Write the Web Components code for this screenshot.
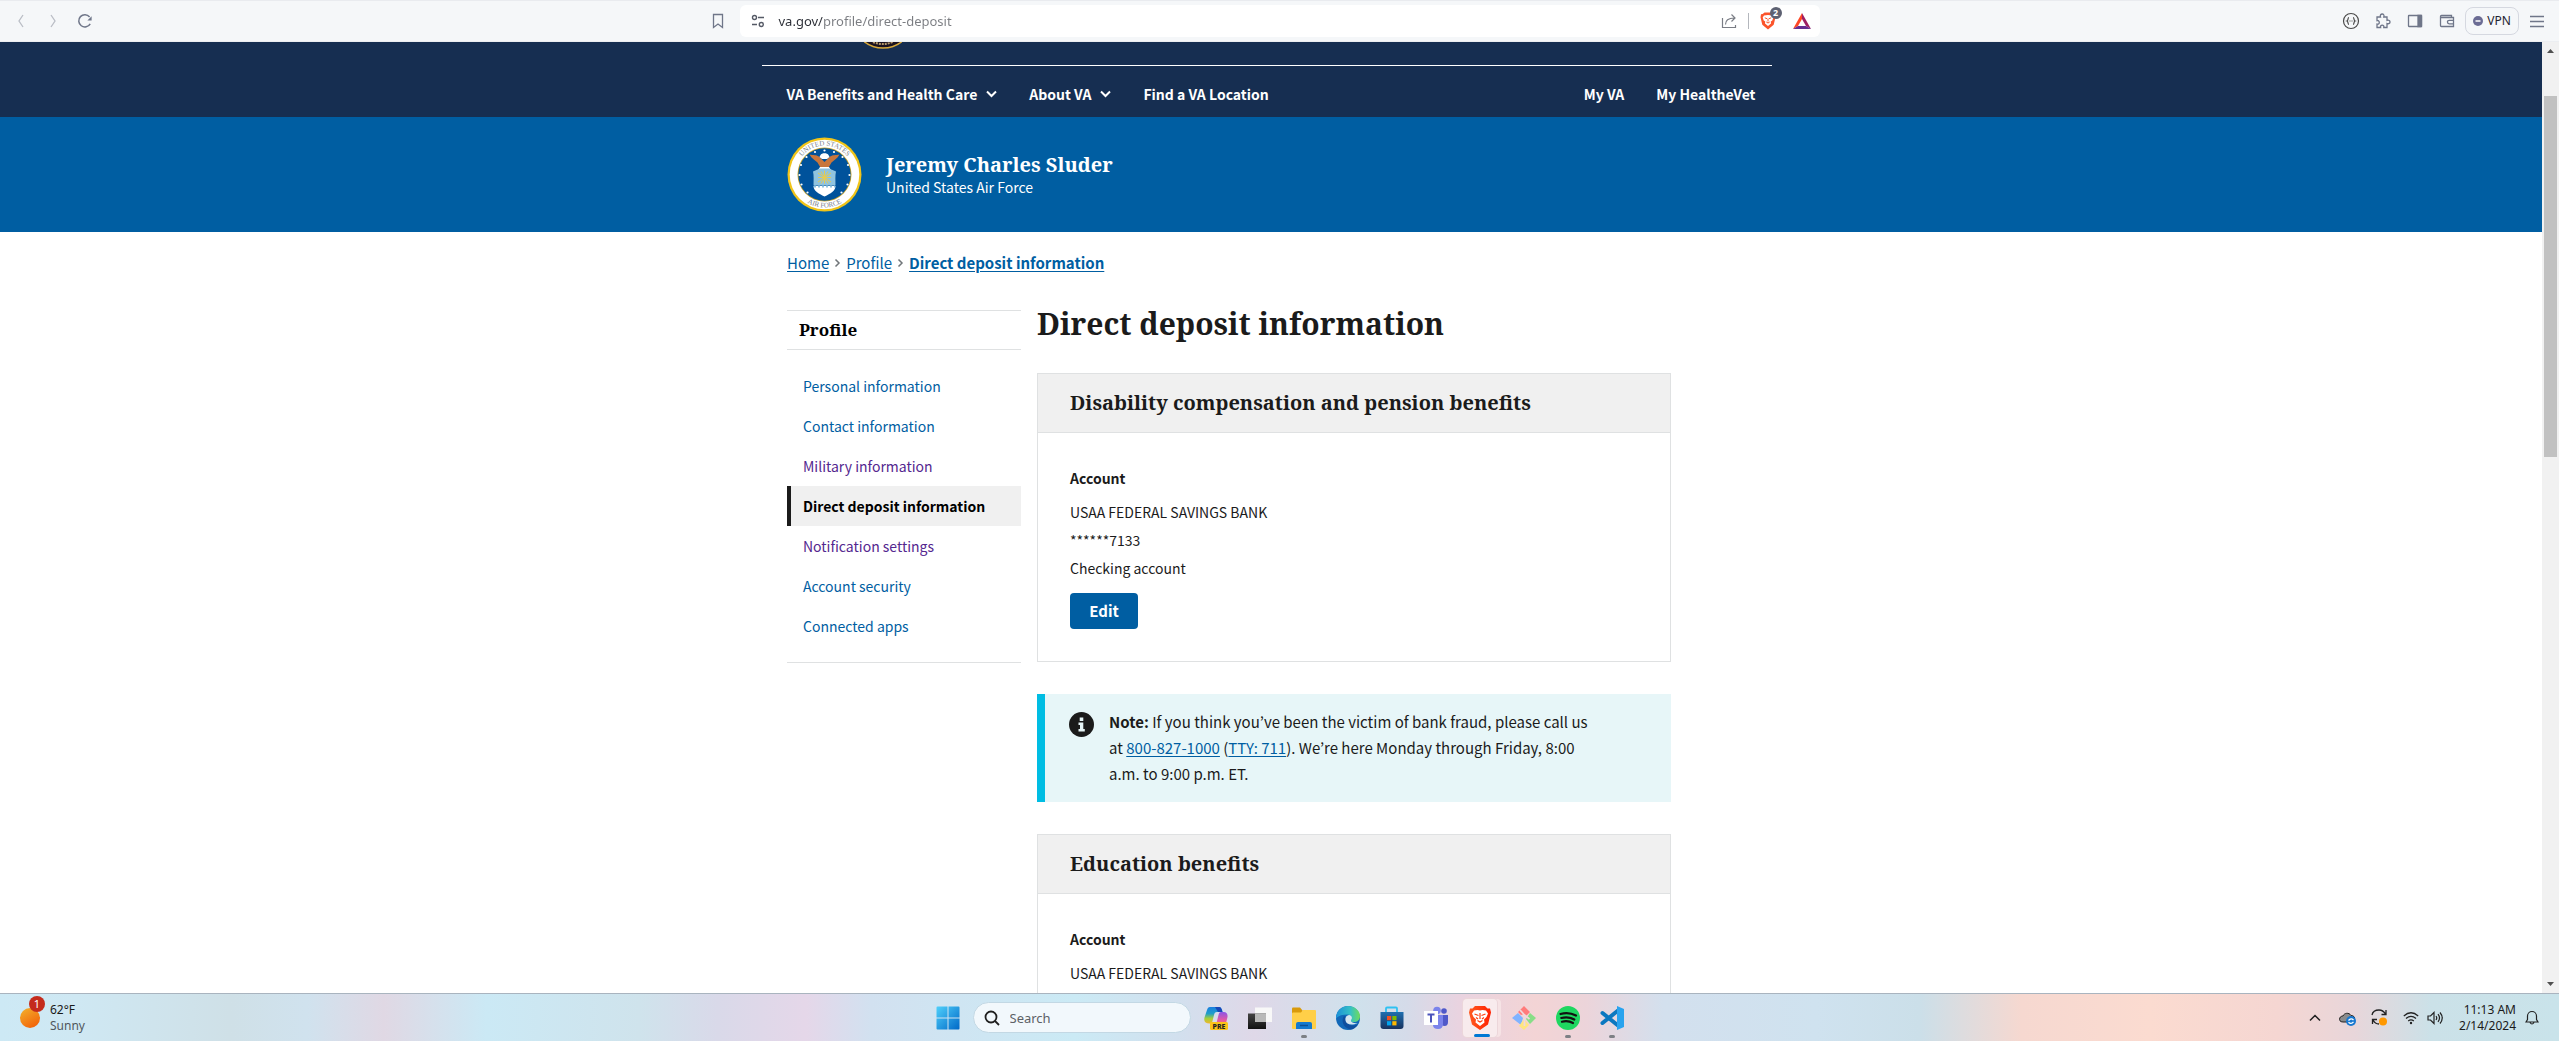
<!DOCTYPE html>
<html lang="en">
<head>
<meta charset="utf-8">
<title>Direct deposit information | Veterans Affairs</title>
<style>
  html, body { height: 100%; }
  body {
    margin: 0;
    overflow: hidden;
    --sans: "Noto Sans CJK JP", "Noto Sans", sans-serif;
    --ui: "Noto Sans", "Open Sans", sans-serif;
    --serif: "Noto Serif", "DejaVu Serif Condensed", serif;
    --link: #005ea2;
    --visited: #54278f;
    --ink: #1b1b1b;
    --line: #dfe1e2;
    font-family: var(--sans);
    font-size: 14px;
    line-height: 20px;
    color: var(--ink);
  }
</style>
</head>
<body>
<desktop-screen></desktop-screen>

<script>
const define = (name, html) => {
  const tpl = document.createElement('template');
  tpl.innerHTML = `<style>*{box-sizing:border-box}button{font:inherit;cursor:pointer}a{color:inherit;text-decoration:none}svg{display:block;flex:none}:host{display:block}</style>` + html;
  customElements.define(name, class extends HTMLElement {
    constructor() {
      super();
      this.attachShadow({ mode: 'open' }).append(tpl.content.cloneNode(true));
    }
  });
};

/* ---------- browser toolbar ---------- */
define('browser-toolbar', `
<style>
  :host { flex: none; height: 42px; background: #f5f7f9; border-top: 1px solid #e9ebef; border-bottom: 1px solid #eceef1; font-family: var(--ui); font-size: 13px; }
  .bar { display: grid; grid-template-columns: 1fr minmax(300px, 1080px) 1fr; align-items: center; height: 40px; }
  button { border: 0; background: none; padding: 0; color: #6f7689; display: flex; align-items: center; justify-content: center; width: 32px; height: 28px; }
  .side { display: flex; align-items: center; }
  .left { padding: 0 6px 0 5px; }
  .left .mark { margin-left: auto; }
  .dim { color: #b9bdc5; }
  .right { justify-content: flex-end; padding-right: 6px; }
  .url { display: flex; align-items: center; height: 32px; background: #fff; border-radius: 6px; padding: 0 2px; }
  input { flex: 1; border: 0; outline: 0; padding: 0 0 0 5px; font: inherit; color: #777; background: linear-gradient(90deg, #2b2e36 50px, #7b7d82 50px) text; -webkit-text-fill-color: transparent; }
  .sep { width: 1px; height: 16px; background: #b4b7bd; margin: 0 3px; }
  .shield { position: relative; margin-right: 2px; }
  .badge { position: absolute; left: 18px; top: 0; width: 12px; height: 12px; border-radius: 6px; background: #5d6172; color: #fff; font-size: 9px; line-height: 12px; text-align: center; font-weight: 700; }
  .vpn { width: 54px; border: 1px solid #d5d8e0; border-radius: 8px; gap: 4px; color: #1f2430; margin: 0 2px; font-size: 12px; }
</style>
<div class="bar">
  <div class="side left">
    <button class="dim" aria-label="Back"><svg width="16" height="16" fill="none" stroke="currentColor" stroke-width="1.3"><path d="M10 2 6 8l4 6"/></svg></button>
    <button class="dim" aria-label="Forward"><svg width="16" height="16" fill="none" stroke="currentColor" stroke-width="1.3"><path d="M6 2l4 6-4 6"/></svg></button>
    <button aria-label="Reload"><svg width="16" height="16" fill="none" stroke="currentColor" stroke-width="1.5"><path d="M13.2 10.8A6.1 6.1 0 1 1 12.6 4"/><path d="M14.6 3.2v4.4h-4.2z" fill="currentColor" stroke="none"/></svg></button>
    <button class="mark" aria-label="Bookmark"><svg width="16" height="16" fill="none" stroke="currentColor" stroke-width="1.3"><path d="M3.5 1.5h9v13L8 11l-4.500 3.500z"/></svg></button>
  </div>
  <div class="url">
    <button aria-label="Site information"><svg width="16" height="16" fill="none" stroke="#555a66" stroke-width="1.400"><circle cx="4.500" cy="4.500" r="2"/><path d="M8 4.500h6M2 11.500h5"/><circle cx="11.300" cy="11.500" r="2"/></svg></button>
    <input aria-label="Address" value="va.gov/profile/direct-deposit">
    <button aria-label="Share"><svg width="16" height="16" fill="none" stroke="#7a7d85" stroke-width="1.200"><path d="M1.500 5v9.500h13V12M4.500 11.500c0-4 2.500-6.500 9-6.500M10.500 1.500 14 5l-3.500 3.500"/></svg></button>
    <span class="sep"></span>
    <button class="shield" aria-label="Shields"><svg width="16" height="18" viewBox="0 0 16 18"><path fill="#fb542b" d="M4.500.5h7l1.800 1.400 1.700.4.500 3-1.800 7.500L8 17.500l-5.700-4.700L.500 5.300l.500-3 1.700-.4z"/><path fill="#fff" d="M4 3.500 8 3l4 .5 1.300 2-1 3-1.500 1 .2 2L8 14l-3-2.500.2-2-1.500-1-1-3z"/><path d="M4.800 5.800 7 6.700M11.200 5.800 9 6.700M8 6.500v3M6.300 10 8 11l1.700-1" stroke="#fb542b" fill="none"/></svg><span class="badge">2</span></button>
    <button aria-label="Rewards"><svg width="18" height="16" viewBox="0 0 18 16"><path fill="#ff4724" d="M9 0 0 16l5-3 4-7z"/><path fill="#9e1f63" d="M9 0l9 16-5-3-4-7z"/><path fill="#662d91" d="M0 16h18l-5-3H5z"/></svg></button>
  </div>
  <div class="side right">
    <button aria-label="JSON viewer"><svg width="18" height="18" fill="none" stroke="#4a4a4a" stroke-width="1.200"><circle cx="9" cy="9" r="7.500"/><path d="M7 5.500c-1.500 0-.5 3-2 3.500 1.500.5.500 3.500 2 3.500M11 5.500c1.500 0 .5 3 2 3.500-1.500.5-.5 3.500-2 3.500"/><path d="M7.500 9h3" stroke-dasharray="1 1"/></svg></button>
    <button aria-label="Extensions"><svg width="16" height="16" fill="none" stroke="currentColor" stroke-width="1.300"><path d="M2 4h3.500C4.800 2 6 1 7.200 1S9.500 2 8.800 4H12v3.300c2-.6 3 .4 3 1.600s-1 2.300-3 1.600V14.500H8.800c.4-1.700-.5-2.300-1.600-2.300s-2 .7-1.600 2.300H2v-3.400c1.800.3 2.300-.7 2.300-1.600S3.700 7.200 2 7.600z"/></svg></button>
    <button aria-label="Sidebar"><svg width="16" height="16" fill="none" stroke="currentColor" stroke-width="1.300"><rect x="1.500" y="2.500" width="13" height="11" rx=".5"/><path d="M11 2.500h3.500v11H11z" fill="currentColor"/></svg></button>
    <button aria-label="Wallet"><svg width="16" height="16" fill="none" stroke="currentColor" stroke-width="1.300"><path d="M12.500 4.500v-2h-10a1 1 0 0 0 0 2h12v9h-12a1 1 0 0 1-1-1V3.500M14.500 7.300H10.200a1.700 1.700 0 0 0 0 3.500h4.300"/></svg></button>
    <button class="vpn"><svg width="10" height="10"><circle cx="5" cy="5" r="5" fill="#6b6c94"/><path d="M2.500 5h5" stroke="#fff" stroke-width="1.500"/></svg>VPN</button>
    <button aria-label="Menu"><svg width="14" height="14" stroke="currentColor" stroke-width="1.300"><path d="M0 2.500h14M0 7.500h14M0 12.500h14"/></svg></button>
  </div>
</div>`);

/* ---------- site header ---------- */
define('site-header', `
<style>
  :host { background: #162e51; color: #fff; font-weight: 700; padding-right: 9px; }
  .wrap { max-width: 1010px; margin: 0 auto; }
  .logo { height: 24px; padding-left: 102px; border-bottom: 1px solid #fff; }
  nav { display: flex; align-items: center; gap: 32px; height: 51px; padding: 4px 16px 0 25px; }
  nav a, nav button { display: flex; align-items: center; gap: 9px; color: #fff; background: none; border: 0; padding: 0; white-space: nowrap; }
  .push { margin-left: auto; }
</style>
<div class="wrap">
  <div class="logo"><svg width="38" height="7" viewBox="0 0 38 7"><circle cx="19" cy="-25" r="31" fill="#1a1220" stroke="#d8a93a" stroke-width="1.500"/><path d="M9 0q10 4 20 0" stroke="#b5986a" stroke-width="2" stroke-dasharray="2 1" fill="none"/></svg></div>
  <nav>
    <button>VA Benefits and Health Care<svg width="11" height="8" fill="none" stroke="#fff" stroke-width="2"><path d="M1 1.500l4.500 4.500L10 1.500"/></svg></button>
    <button>About VA<svg width="11" height="8" fill="none" stroke="#fff" stroke-width="2"><path d="M1 1.500l4.500 4.500L10 1.500"/></svg></button>
    <a href="#">Find a VA Location</a>
    <a class="push" href="#">My VA</a>
    <a href="#">My HealtheVet</a>
  </nav>
</div>`);

/* ---------- name banner ---------- */
define('branch-seal', `
<svg width="75" height="75" viewBox="0 0 75 75" role="img" aria-label="Air Force seal">
  <defs><path id="top" d="M8.500 37.500a29 29 0 0 1 58 0"/><path id="bot" d="M4.500 37.500a33 33 0 0 0 66 0"/></defs>
  <circle cx="37.500" cy="37.500" r="37" fill="#f0c419"/><circle cx="37.500" cy="37.500" r="34.800" fill="#fff"/>
  <circle cx="37.500" cy="37.500" r="27" fill="#c9a227"/><circle cx="37.500" cy="37.500" r="26.200" fill="#00529b"/>
  <g fill="#77808c" font-family="Liberation Serif, serif" font-size="7"><text text-anchor="middle"><textPath href="#top" startOffset="50%">UNITED STATES</textPath></text><text text-anchor="middle"><textPath href="#bot" startOffset="50%">AIR FORCE</textPath></text></g>
  <g fill="#fff"><circle cx="37.500" cy="13.500" r="1.100"/><circle cx="28" cy="15" r="1.100"/><circle cx="47" cy="15" r="1.100"/><circle cx="19.500" cy="20" r="1.100"/><circle cx="55.500" cy="20" r="1.100"/><circle cx="14" cy="28" r="1.100"/><circle cx="61" cy="28" r="1.100"/><circle cx="12.500" cy="38" r="1.100"/><circle cx="62.500" cy="38" r="1.100"/><circle cx="14.500" cy="47.500" r="1.100"/><circle cx="60.500" cy="47.500" r="1.100"/><circle cx="20.500" cy="55.500" r="1.100"/><circle cx="54.500" cy="55.500" r="1.100"/></g>
  <path fill="#c8763c" d="M22.500 17.500c4 1 7 0 10 2.500l5 5 5-5c3-2.500 6-1.500 10-2.500-2 4-6 6-8 8l-3.500 6h-7l-3.500-6c-2-2-6-4-8-8z"/>
  <path fill="#fff" d="M33.500 18c1-2.500 7-2.500 8 0l1 2-2.500 2h-5l-2.500-2zM33 30h9l2 3H31z"/>
  <path fill="#8fc3df" d="M26 34.500c3.500-1.500 5-2 6.500-3h10c1.500 1 3 1.500 6.500 3-1 4-.5 9-.5 14h-22c0-5 .5-10-.5-14z"/>
  <path fill="#fff" d="M26.500 49h22c0 5-5 7.500-11 10.500-6-3-11-5.500-11-10.500z"/><path d="M27 49.500h21" stroke="#8fc3df" stroke-width="2" stroke-dasharray="2 2"/>
  <path d="M37.500 33.500v13M31 36l13 9M44 36l-13 9M31 40.500h13M34 34.500l7 12M41 34.500l-7 12" stroke="#e5cb53" stroke-width="1"/>
</svg>`);
define('name-tag', `
<style>
  :host { background: #005ea2; color: #fff; }
  .wrap { display: flex; align-items: center; gap: 24px; max-width: 1000px; height: 115px; margin: 0 auto; padding: 0 16px; }
  h2 { margin: 0; font: 700 20px/24px var(--serif); }
  p { margin: 0; }
</style>
<div class="wrap"><branch-seal></branch-seal><div><h2><slot name="name"></slot></h2><p><slot></slot></p></div></div>`);

/* ---------- breadcrumb ---------- */
define('bread-crumbs', `
<style>
  :host { font-size: 15px; color: var(--link); }
  nav { display: flex; align-items: center; gap: 5px; height: 24px; }
  a { text-decoration: underline; text-underline-offset: 2px; }
  a[aria-current] { font-weight: 700; }
</style>
<nav aria-label="Breadcrumb">
  <a href="#">Home</a><svg width="7" height="10" fill="none" stroke="#71767a" stroke-width="1.500"><path d="M1.500 1.500 5 5 1.500 8.500"/></svg>
  <a href="#">Profile</a><svg width="7" height="10" fill="none" stroke="#71767a" stroke-width="1.500"><path d="M1.500 1.500 5 5 1.500 8.500"/></svg>
  <a href="#" aria-current="page">Direct deposit information</a>
</nav>`);

/* ---------- sidebar ---------- */
define('profile-nav', `
<style>
  :host { border-bottom: 1px solid var(--line); padding-bottom: 16px; }
  h2 { margin: 0 0 16px; padding: 0 12px; border: solid var(--line); border-width: 1px 0; font: 700 17px/38px var(--serif); color: #000; }
  ul { list-style: none; margin: 0; padding: 0; }
  a { display: block; line-height: 40px; padding: 0 12px; border-left: 4px solid transparent; color: var(--link); }
  a.seen { color: var(--visited); }
  a[aria-current] { color: #000; font-weight: 700; background: #f0f0f0; border-color: var(--ink); }
</style>
<nav aria-label="Profile"><h2>Profile</h2>
<ul>
  <li><a href="#">Personal information</a></li>
  <li><a href="#">Contact information</a></li>
  <li><a class="seen" href="#">Military information</a></li>
  <li><a href="#" aria-current="page">Direct deposit information</a></li>
  <li><a class="seen" href="#">Notification settings</a></li>
  <li><a href="#">Account security</a></li>
  <li><a href="#">Connected apps</a></li>
</ul></nav>`);

/* ---------- benefit card ---------- */
define('benefit-card', `
<style>
  :host { border: 1px solid var(--line); }
  h2 { margin: 0; padding: 0 32px; background: #f0f0f0; border-bottom: 1px solid var(--line); font: 700 20px/58px var(--serif); }
  .body { padding: 32px; min-height: 228px; }
  h3 { margin: 0 0 7px; font-size: 14px; line-height: 26px; }
  ::slotted(p) { margin: 0; line-height: 28px; }
</style>
<h2><slot name="title"></slot></h2>
<div class="body"><h3>Account</h3><slot></slot></div>`);
define('edit-button', `
<style>
  :host { margin-top: 11px; }
  button { height: 36px; width: 68px; border: 0; border-radius: 4px; background: var(--link); color: #fff; font-weight: 700; font-size: 15px; padding: 0; display: block; }
</style>
<button><slot></slot></button>`);

/* ---------- fraud note ---------- */
define('fraud-note', `
<style>
  :host { display: flex; gap: 15px; background: #e7f6f8; border-left: 8px solid #00bde3; padding: 15px 72px 15px 24px; font-size: 15px; line-height: 26px; }
  p { margin: 0; }
  a { color: var(--link); text-decoration: underline; text-underline-offset: 2px; }
  svg { margin-top: 3px; }
</style>
<svg width="25" height="25" viewBox="0 0 25 25"><circle cx="12.500" cy="12.500" r="12.500" fill="#1b1b1b"/><path fill="#e7f6f8" d="M10.700 5.500h3.600v3.500h-3.600zM9.500 10.500h4.800v6.500h1.500v2.500H9.500V17H11v-4H9.500z"/></svg>
<p><b>Note:</b> If you think you’ve been the victim of bank fraud, please call us <span>at </span><a href="tel:8008271000">800-827-1000</a> (<a href="tel:711">TTY: 711</a>)<span>. We’re here Monday through Friday, 8:00 </span><span>a.m. to 9:00 p.m. ET.</span></p>`);

/* ---------- page ---------- */
define('profile-page', `
<style>
  :host { flex: 1; min-width: 0; overflow: hidden; background: #fff; }
  main { max-width: 1000px; margin: 0 auto; padding: 19px 16px; }
  .cols { display: grid; grid-template-columns: 234px 634px; gap: 16px; align-items: start; margin-top: 27px; }
  profile-nav { margin-top: 8px; }
  h1 { margin: 0 0 27px; font: 700 30px/44px var(--serif); }
  .stack { display: flex; flex-direction: column; gap: 32px; }
</style>
<site-header></site-header>
<name-tag><span slot="name">Jeremy Charles Sluder</span>United States Air Force</name-tag>
<main>
  <bread-crumbs></bread-crumbs>
  <div class="cols">
    <profile-nav></profile-nav>
    <div>
      <h1>Direct deposit information</h1>
      <div class="stack">
        <benefit-card><span slot="title">Disability compensation and pension benefits</span><p>USAA FEDERAL SAVINGS BANK</p><p>******7133</p><p>Checking account</p><edit-button>Edit</edit-button></benefit-card>
        <fraud-note></fraud-note>
        <benefit-card><span slot="title">Education benefits</span><p>USAA FEDERAL SAVINGS BANK</p></benefit-card>
      </div>
    </div>
  </div>
</main>`);

define('scroll-bar', `
<style>
  :host { flex: none; width: 17px; background: #f1f1f1; display: flex; flex-direction: column; align-items: center; padding: 7px 2px; }
  .thumb { width: 13px; flex: 0 0 38.5%; margin-top: 43px; background: #c1c1c1; }
  .down { margin-top: auto; }
</style>
<svg width="7" height="4"><path d="M0 4h7L3.500 0z" fill="#505050"/></svg><div class="thumb"></div><svg class="down" width="7" height="4"><path d="M0 0h7L3.500 4z" fill="#505050"/></svg>`);

/* ---------- taskbar ---------- */
define('task-bar', `
<style>
  :host { flex: none; height: 48px; border-top: 1px solid #a9b4bf; font-family: var(--ui); font-size: 12px; line-height: 16px; color: #1a1a1a;
    background: linear-gradient(90deg, #cde9f5 0, #cfe8f3 3%, #cfe0e7 9%, #d0e2ee 12%, #e0d8e4 15%, #cbe9f5 19%, #cfe3ec 25%, #d9d9e9 28%, #e5d7e9 31.500%, #d2e1f0 34%, #cbeaf5 42%, #d2e0ee 46%, #dfd8e8 49%, #cfe1ec 53%, #d5dbe9 55%, #e9d3e0 57%, #f3d4d5 60%, #ecd4da 62%, #d3e0ee 65%, #cfe2ef 71%, #cbdfe9 75%, #f6d8d0 79%, #fbdbd0 84%, #f5d6d2 89%, #e8d6da 92%, #cbe1e8 95%, #c9e3ea 100%); }
  .row { display: grid; grid-template-columns: 1fr auto 1fr; align-items: center; height: 47px; }
  button { border: 0; background: none; padding: 0; color: inherit; position: relative; display: flex; align-items: center; justify-content: center; width: 44px; height: 40px; }
  .mid { display: flex; align-items: center; }
  .search { display: flex; align-items: center; gap: 10px; width: 218px; height: 31px; margin: 0 3px; padding-left: 10px; border-radius: 16px; background: #f2f8fc; border: 1px solid #c3d8e4; }
  .search input { width: 150px; border: 0; outline: 0; background: none; font: inherit; font-size: 13px; padding: 0; }
  .search input::placeholder { color: #5c6166; opacity: 1; }
  .dot::after { content: ""; position: absolute; left: 19px; bottom: 0; width: 6px; height: 3px; border-radius: 2px; background: #7d8085; }
  .on { width: 34px; height: 38px; margin: 0 5px; background: #f8ebed; border-radius: 4px; box-shadow: 0 0 0 1px #ecd6da, 4px 0 0 0 #f6e3e5; }
  .on::after { content: ""; position: absolute; left: 11px; bottom: 0; width: 16px; height: 3px; border-radius: 2px; background: #0078d4; }
  .weather { justify-content: flex-start; width: 150px; margin-left: 20px; gap: 10px; text-align: left; height: 44px; }
  .weather small { display: block; font-size: 12px; color: #50575c; }
  .weather .n { position: absolute; left: 9px; top: 0; width: 16px; height: 16px; border-radius: 8px; background: #c42b1c; color: #fff; font-size: 11px; text-align: center; }
  .tray { display: flex; justify-content: flex-end; align-items: center; padding-right: 20px; }
  .tray button { width: 32px; }
  .tray .net { width: auto; gap: 8px; padding: 0 4px 0 8px; }
  .tray .clock { display: block; width: auto; height: auto; text-align: right; padding: 0 8px 0 12px; line-height: 16px; }
  .tray .bell { width: 15px; }
</style>
<div class="row">
  <button class="weather"><svg width="20" height="20"><defs><linearGradient id="s" x2=".6" y2="1"><stop stop-color="#f3b32e"/><stop offset="1" stop-color="#f2660a"/></linearGradient></defs><circle cx="10" cy="10" r="10" fill="url(#s)"/></svg><span class="n">1</span><span>62°F<small>Sunny</small></span></button>
  <div class="mid">
    <button aria-label="Start"><svg width="24" height="24"><defs><linearGradient id="w" x2="1" y2="1"><stop stop-color="#4fd0fb"/><stop offset="1" stop-color="#0068c7"/></linearGradient></defs><path fill="url(#w)" d="M.500 1.500a1 1 0 0 1 1-1H11.500v11H.500zM12.500.500h10a1 1 0 0 1 1 1v10h-11zM.500 12.500h11v11h-10a1 1 0 0 1-1-1zM12.500 12.500h11v10a1 1 0 0 1-1 1h-10z"/></svg></button>
    <label class="search"><svg width="16" height="16" fill="none" stroke="#1f1f1f" stroke-width="1.800"><circle cx="7" cy="7" r="5.500"/><path d="M11 11l4 4"/></svg><input placeholder="Search" aria-label="Search"></label>
    <button aria-label="Copilot"><svg width="24" height="24"><defs><linearGradient id="c1" x2="0" y2="1"><stop stop-color="#1a7fe0"/><stop offset=".4" stop-color="#1f9ec9"/><stop offset=".7" stop-color="#a6cf3a"/><stop offset="1" stop-color="#f2b62c"/></linearGradient><linearGradient id="c2" x2="0" y2="1"><stop stop-color="#8a55e8"/><stop offset=".6" stop-color="#e85aa0"/><stop offset="1" stop-color="#f58a5a"/></linearGradient></defs><path fill="url(#c1)" d="M6 1h9c2 0 3 2 3.500 5H13c-2 0-2.500 1-3 3l-1.500 6c-.5 2-1 2.500-3 2.500-4 0-6-2-5-6L3 4c.6-2 1.400-3 3-3z"/><path fill="#1648b8" d="M11 1h4c2 0 3 2 3.500 5H14z"/><path fill="url(#c2)" d="M17 6h2.500c4 0 4.500 3 3.800 6L22 17c-.6 2-1.500 3-4 3H9c2 0 3-1.500 3.500-3l2-8c.5-2 1-3 2.500-3z"/><rect x="6" y="16" width="18" height="8" rx="1.500" fill="#fcc419"/><text x="15" y="23" text-anchor="middle" font-size="7" font-weight="800" fill="#222">PRE</text></svg></button>
    <button aria-label="Task view"><svg width="24" height="24"><defs><linearGradient id="t" x2="0" y2="1"><stop stop-color="#444"/><stop offset="1" stop-color="#111"/></linearGradient></defs><path d="M7 1.500h17V16H7z" fill="#f8f8f8"/><path d="M0 7.500h18V23H0z" fill="url(#t)"/><path d="M7 7.500h11V16H7z" fill="#b9b9b9"/></svg></button>
    <button class="dot" aria-label="File Explorer"><svg width="24" height="24"><path fill="#d99a0b" d="M0 2.500Q0 1.500 1 1.500h7l2.500 3V8H0z"/><path fill="#ffcf48" d="M1 6.500h8l2-2.500h12q1 0 1 1v17q0 1-1 1H1q-1 0-1-1V7.500q0-1 1-1z"/><path fill="#1379cf" d="M4 23v-5q0-2 2-2h12q2 0 2 2v5z"/><path d="M8 19.500h8" stroke="#0b4f94" stroke-width="1.500"/></svg></button>
    <button aria-label="Edge"><svg width="24" height="24"><defs><linearGradient id="e" x2="1"><stop stop-color="#1c8fd8"/><stop offset=".6" stop-color="#35c1c5"/><stop offset="1" stop-color="#6fdc5a"/></linearGradient></defs><circle cx="12" cy="12" r="12" fill="#1268b8"/><path fill="url(#e)" d="M0 11C1 4 6 0 12 0c7 0 12 5 12 10 0 4-3 6-6 6-3 0-4-1-3.500-2 2-2 .5-5.500-3-5.500C6 8.500 1.500 10 0 13z"/><path fill="#0f4f9e" d="M8 10c-3 4-1.500 11 6 13.500 3 0 6-2 8-5-4 2-10 1.500-11-3-.5-2 .5-3 1-3.500z"/><path fill="#d6e6ef" d="M15 14c2-2 .5-5-2-5-3 .5-4 3-3.500 5.500C10 18.500 16 20 21.500 17c-3 .5-7-.5-6.500-3z"/></svg></button>
    <button aria-label="Store"><svg width="24" height="24"><defs><linearGradient id="st" x2="0" y2="1"><stop stop-color="#1e6fb0"/><stop offset="1" stop-color="#18325e"/></linearGradient></defs><path d="M6 6V2.500Q6 1.500 7 1.500h9q1 0 1 1V6" fill="none" stroke="#2fc1f2" stroke-width="1.800"/><path fill="url(#st)" d="M.500 6h23v14q0 3-3 3h-17q-3 0-3-3z"/><path fill="#f25022" d="M7 10h4.200v4.200H7z"/><path fill="#7fba00" d="M12.300 10h4.200v4.200h-4.200z"/><path fill="#00a4ef" d="M7 15.200h4.200v4.200H7z"/><path fill="#ffb900" d="M12.300 15.200h4.200v4.200h-4.200z"/></svg></button>
    <button aria-label="Teams"><svg width="24" height="24"><circle cx="20" cy="5" r="2.800" fill="#5059c9"/><circle cx="13" cy="4.500" r="3.800" fill="#7b83eb"/><path fill="#5059c9" d="M18 9h6v7q0 4-3.500 4T17 16z"/><path fill="#7b83eb" d="M9 9h10v9q0 5-5 5t-5-4z"/><path fill="#fff" d="M0 5h14v14H0z"/><path d="M3.500 8.500h7M7 8.500v8" stroke="#4b53bc" stroke-width="2" fill="none"/></svg></button>
    <button class="on" aria-label="Brave"><svg width="22" height="24"><defs><linearGradient id="b" x2="1"><stop stop-color="#ff5a20"/><stop offset="1" stop-color="#ff2000"/></linearGradient></defs><path fill="url(#b)" d="M6 0h10l2.500 2.500 2.500 0 1 4-3 12L11 24l-8-5.500-3-12 1-4h2.500z"/><path fill="#fff" d="M5 4.500 8.500 4 11 4.500l2.500-.5 3.500.5 2 3-1.500 3.500-2.500 2.500.5 3L11 20l-4.500-3.500.5-3L4.500 11 3 7.500z"/><path d="M5.500 8 9.500 9.500M16.500 8l-4 1.500M11 7v6M8.500 14.500l2.500 1.500 2.500-1.500M7 11.500l2 1.500M15 11.500 13 13" stroke="#ff3d10" stroke-width="1.200" fill="none"/></svg></button>
    <button aria-label="Git"><svg width="24" height="24"><path fill="#ff7b7b" d="M12 0l6 6-4 4-2-2-3 1-3-3z"/><path fill="#80b3ff" d="M6 7l5 5-2 7-9-7z"/><path fill="#87de87" d="M18 7l6 5-6 6-4-5z"/><path fill="#ffe680" d="M12 13l5 6-5 5-5-4z"/><path d="M8 4l4.500 5v11M12.500 9l5 4" stroke="#f0d8dc" stroke-width="1.800" fill="none"/></svg></button>
    <button class="dot" aria-label="Spotify"><svg width="24" height="24"><circle cx="12" cy="12" r="12" fill="#1ed760"/><path d="M4.500 8q8-2.500 15.500 1.500M5.300 12q7-2 13 1.500M6 15.700q6-1.500 11 1.300" fill="none" stroke="#111" stroke-width="2.200" stroke-linecap="round"/></svg></button>
    <button class="dot" aria-label="VS Code"><svg width="24" height="24"><path d="M18 4.500 2.500 17M2.500 7 18 19.500" stroke="#0b78c0" stroke-width="4" stroke-linecap="round"/><path fill="#29a3ee" d="M17 0l7 3v18l-7 3z"/></svg></button>
  </div>
  <div class="tray">
    <button aria-label="Hidden icons"><svg width="12" height="8" fill="none" stroke="#222" stroke-width="1.500"><path d="M1 6.500l5-5 5 5"/></svg></button>
    <button aria-label="OneDrive"><svg width="17" height="16"><path d="M4 12C1 12 0 10 .8 8 1.200 6.500 3 6 4 6c1-3 6-4 8-.5 3 0 4 2 3.500 4L12 12z" fill="#8b8b8b" stroke="#222"/><circle cx="12" cy="11" r="5" fill="#1878d0"/><path d="M9.500 10.500q2.500-3 5-.5M14.500 11.800q-2.500 3-5 .5" stroke="#fff" fill="none" stroke-width="1.300"/></svg></button>
    <button aria-label="Updates"><svg width="17" height="17" fill="none" stroke="#222" stroke-width="1.300"><path d="M1 6q1-5 7-5 4 0 6.500 4M15 1v4.500h-4.500M1.500 15v-4.500H6M2 11q2 4 6 4"/><circle cx="12" cy="12.500" r="4" fill="#ff9800" stroke="none"/></svg></button>
    <button class="net" aria-label="Network and volume"><svg width="16" height="14" fill="none" stroke="#222" stroke-width="1.200"><path d="M.800 5Q8-1.500 15.200 5M3 7.500q5-4.300 10 0M5.200 10q2.800-2.400 5.600 0"/><circle cx="8" cy="12" r="1.200" fill="#222" stroke="none"/></svg><svg width="16" height="14" fill="none" stroke="#222" stroke-width="1.200"><path d="M1 5h2.500L7 1.500v11L3.500 9H1zM9 5q1.500 2 0 4M11 3.200q3 3.800 0 7.600M13 1.500q4.500 5.500 0 11"/></svg></button>
    <button class="clock">11:13 AM<br>2/14/2024</button>
    <button class="bell" aria-label="Notifications"><svg width="14" height="16" fill="none" stroke="#222" stroke-width="1.200"><path d="M1 12 2.500 9.500V6a4.500 4.500 0 0 1 9 0v3.500L13 12zM5 12.500q2 3 4 0"/></svg></button>
  </div>
</div>`);

define('desktop-screen', `
<style>
  :host { display: flex; flex-direction: column; height: 100vh; }
  .view { flex: 1; min-height: 0; display: flex; }
</style>
<browser-toolbar></browser-toolbar>
<div class="view"><profile-page></profile-page><scroll-bar></scroll-bar></div>
<task-bar></task-bar>`);
</script>
</body>
</html>
